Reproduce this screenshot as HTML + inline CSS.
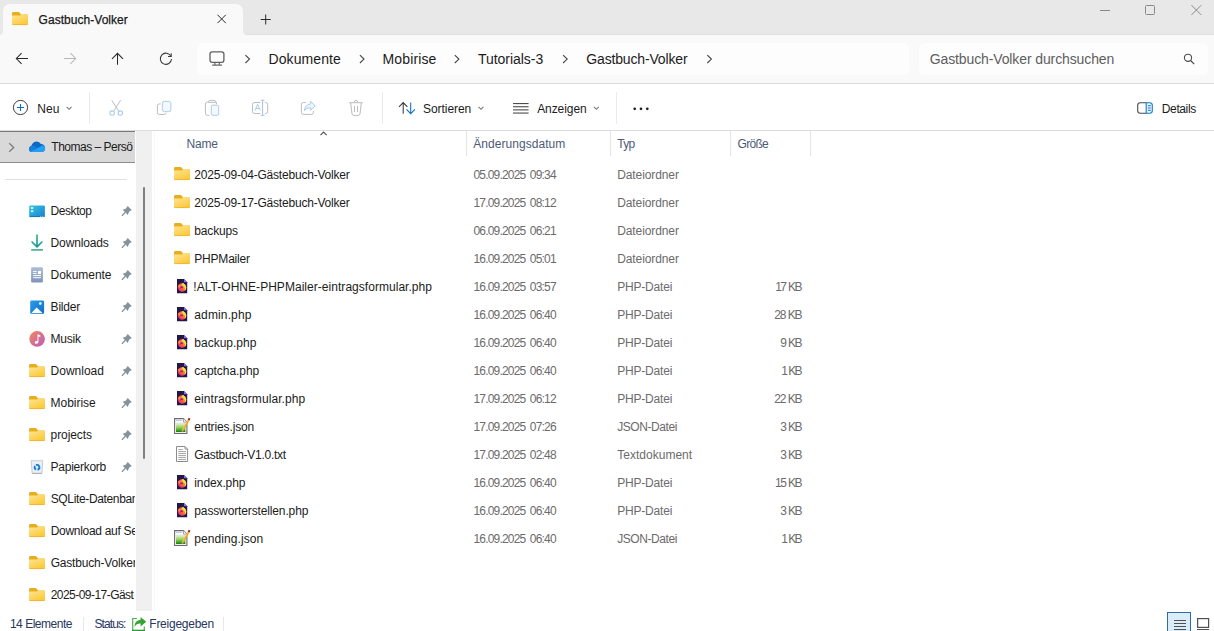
<!DOCTYPE html>
<html lang="de">
<head>
<meta charset="utf-8">
<title>Gastbuch-Volker</title>
<style>
*{box-sizing:border-box;margin:0;padding:0}
html,body{width:1214px;height:631px;overflow:hidden;background:#fff}
body{font-family:"Liberation Sans","DejaVu Sans",sans-serif;font-size:12px;color:#1b1b1b;position:relative}
.abs{position:absolute}
.t{position:absolute;white-space:nowrap;line-height:16px;height:16px}
svg{position:absolute;overflow:visible}
#titlebar{left:0;top:0;width:1214px;height:35px;background:#e8e8e8;border-bottom:1px solid #e0e0e0}
#tab{left:3px;top:4px;width:240px;height:31px;background:#f9f9f9;border-radius:7px 7px 0 0}
#tabcl{left:-4px;top:27px;width:4px;height:4px;background:radial-gradient(circle at 0 0,rgba(249,249,249,0) 3.5px,#f9f9f9 4.5px)}
#tabcr{left:243px;top:31px;width:4px;height:4px;background:radial-gradient(circle at 100% 0,rgba(249,249,249,0) 3.5px,#f9f9f9 4.5px)}
#navbar{left:0;top:35px;width:1214px;height:48px;background:#f9f9f9}
#navline{left:0;top:83px;width:1214px;height:1px;background:#d9d9d9}
#addr{left:197px;top:43px;width:712px;height:31.5px;background:#fdfdfd;border-radius:5px}
#search{left:918.5px;top:43px;width:289.5px;height:31.5px;background:#fdfdfd;border-radius:5px}
#cmdbar{left:0;top:84px;width:1214px;height:46px;background:#fff}
#cmdline{left:0;top:130px;width:1214px;height:1px;background:#dcdcdc}
.csep{position:absolute;top:92px;width:1px;height:32px;background:#ebebeb}
#sidesel{left:0;top:131px;width:135px;height:32px;background:#d9d9d9;border-top:1px solid #7a7a7a;border-bottom:1px solid #8c8c8c}
#sbtrack{left:136px;top:131px;width:16px;height:480px;background:#f0f0f0}
#sbthumb{left:143px;top:187.3px;width:2.2px;height:271.4px;background:#7f7f7f;border-radius:1px}
#sidediv{left:5px;top:179px;width:122px;height:1px;background:#e0e0e0}
.hsep{position:absolute;top:131px;width:1px;height:25px;background:#e5e5e5}
.ssep{position:absolute;top:617px;width:1px;height:14px;background:#e8e8e8}
#vbtn{left:1167px;top:612px;width:24px;height:22px;background:#d9ecf8;border:1px solid #2e6da4}
</style>
</head>

<body>
<!-- TITLE BAR -->
<div id="titlebar" class="abs"></div>
<div id="tab" class="abs"><div id="tabcl" class="abs"></div></div>
<div id="tabcr" class="abs"></div>
<!-- NAV BAR -->
<div id="navbar" class="abs"></div>
<div id="navline" class="abs"></div>
<div id="addr" class="abs"></div>
<div id="search" class="abs"></div>
<!-- COMMAND BAR -->
<div id="cmdbar" class="abs"></div>
<div id="cmdline" class="abs"></div>
<div class="csep" style="left:89px"></div>
<div class="csep" style="left:382px"></div>
<div class="csep" style="left:616px"></div>
<!-- SIDEBAR -->
<div id="sidesel" class="abs"></div>
<div id="sbtrack" class="abs"></div>
<div id="sbthumb" class="abs"></div>
<div id="sidediv" class="abs"></div>
<div class="abs" style="left:154px;top:131px;width:1px;height:480px;background:#f7f7f7"></div>
<!-- LIST HEADER -->
<div class="hsep" style="left:466px"></div>
<div class="hsep" style="left:610px"></div>
<div class="hsep" style="left:730px"></div>
<div class="hsep" style="left:810px"></div>
<!-- STATUS BAR -->
<div class="ssep" style="left:83px"></div>
<div class="ssep" style="left:223px"></div>
<div id="vbtn" class="abs"></div>

<!-- TEXT -->
<div class="t" style="left:38.60px;top:12px;color:#1a1a1a;letter-spacing:0.035px;-webkit-text-stroke:0.25px #1a1a1a;">Gastbuch-Volker</div>
<div class="t" style="left:268.50px;top:51px;font-size:14px;letter-spacing:0.087px;">Dokumente</div>
<div class="t" style="left:382.60px;top:51px;font-size:14px;letter-spacing:0.112px;">Mobirise</div>
<div class="t" style="left:477.90px;top:51px;font-size:14px;letter-spacing:-0.023px;">Tutorials-3</div>
<div class="t" style="left:586.30px;top:51px;font-size:14px;letter-spacing:-0.160px;">Gastbuch-Volker</div>
<div class="t" style="left:929.70px;top:51px;font-size:14px;color:#5e5e5e;letter-spacing:-0.114px;">Gastbuch-Volker durchsuchen</div>
<div class="t" style="left:37.30px;top:101px;letter-spacing:0.030px;">Neu</div>
<div class="t" style="left:423.10px;top:101px;letter-spacing:-0.077px;">Sortieren</div>
<div class="t" style="left:537.20px;top:101px;letter-spacing:-0.081px;">Anzeigen</div>
<div class="t" style="left:1161.80px;top:101px;letter-spacing:-0.380px;">Details</div>
<div class="t" style="left:51.30px;top:139px;letter-spacing:-0.489px;overflow:hidden;width:81.70px;">Thomas – Persönlich</div>
<div class="t" style="left:50.60px;top:203px;letter-spacing:-0.441px;">Desktop</div>
<div class="t" style="left:50.60px;top:235px;letter-spacing:-0.146px;">Downloads</div>
<div class="t" style="left:50.60px;top:267px;letter-spacing:-0.061px;">Dokumente</div>
<div class="t" style="left:50.60px;top:299px;letter-spacing:-0.217px;">Bilder</div>
<div class="t" style="left:50.60px;top:331px;letter-spacing:-0.234px;">Musik</div>
<div class="t" style="left:50.60px;top:363px;">Download</div>
<div class="t" style="left:50.60px;top:395px;letter-spacing:-0.039px;">Mobirise</div>
<div class="t" style="left:50.60px;top:427px;letter-spacing:-0.088px;">projects</div>
<div class="t" style="left:50.60px;top:459px;letter-spacing:-0.262px;">Papierkorb</div>
<div class="t" style="left:50.70px;top:491px;letter-spacing:-0.352px;overflow:hidden;width:84.30px;">SQLite-Datenbanken</div>
<div class="t" style="left:50.70px;top:523px;letter-spacing:-0.301px;overflow:hidden;width:84.30px;">Download auf Server</div>
<div class="t" style="left:50.70px;top:555px;letter-spacing:-0.194px;overflow:hidden;width:84.30px;">Gastbuch-Volker</div>
<div class="t" style="left:50.70px;top:587px;letter-spacing:-0.535px;overflow:hidden;width:83.60px;">2025-09-17-Gästebuch-Volker</div>
<div class="t" style="left:186.60px;top:136px;color:#4c5a78;letter-spacing:-0.245px;">Name</div>
<div class="t" style="left:473.30px;top:136px;color:#4c5a78;letter-spacing:0.046px;">Änderungsdatum</div>
<div class="t" style="left:617.20px;top:136px;color:#4c5a78;letter-spacing:-0.634px;">Typ</div>
<div class="t" style="left:737.60px;top:136px;color:#4c5a78;letter-spacing:-0.733px;">Größe</div>
<div class="t" style="left:194.30px;top:167px;letter-spacing:-0.203px;">2025-09-04-Gästebuch-Volker</div>
<div class="t" style="left:473.40px;top:167px;color:#6b6b6b;letter-spacing:-0.797px;word-spacing:1.8px;">05.09.2025 09:34</div>
<div class="t" style="left:617.20px;top:167px;color:#6b6b6b;letter-spacing:-0.101px;">Dateiordner</div>
<div class="t" style="left:194.30px;top:195px;letter-spacing:-0.203px;">2025-09-17-Gästebuch-Volker</div>
<div class="t" style="left:473.40px;top:195px;color:#6b6b6b;letter-spacing:-0.797px;word-spacing:1.8px;">17.09.2025 08:12</div>
<div class="t" style="left:617.20px;top:195px;color:#6b6b6b;letter-spacing:-0.101px;">Dateiordner</div>
<div class="t" style="left:194.30px;top:223px;letter-spacing:-0.166px;">backups</div>
<div class="t" style="left:473.40px;top:223px;color:#6b6b6b;letter-spacing:-0.797px;word-spacing:1.8px;">06.09.2025 06:21</div>
<div class="t" style="left:617.20px;top:223px;color:#6b6b6b;letter-spacing:-0.101px;">Dateiordner</div>
<div class="t" style="left:194.30px;top:251px;letter-spacing:-0.206px;">PHPMailer</div>
<div class="t" style="left:473.40px;top:251px;color:#6b6b6b;letter-spacing:-0.797px;word-spacing:1.8px;">16.09.2025 05:01</div>
<div class="t" style="left:617.20px;top:251px;color:#6b6b6b;letter-spacing:-0.101px;">Dateiordner</div>
<div class="t" style="left:193.30px;top:279px;letter-spacing:0.038px;">!ALT-OHNE-PHPMailer-eintragsformular.php</div>
<div class="t" style="left:473.40px;top:279px;color:#6b6b6b;letter-spacing:-0.797px;word-spacing:1.8px;">16.09.2025 03:57</div>
<div class="t" style="left:617.20px;top:279px;color:#6b6b6b;letter-spacing:-0.190px;">PHP-Datei</div>
<div class="t" style="left:775.20px;top:279px;color:#6b6b6b;letter-spacing:-1.546px;word-spacing:0.8px;">17 KB</div>
<div class="t" style="left:194.30px;top:307px;letter-spacing:0.129px;">admin.php</div>
<div class="t" style="left:473.40px;top:307px;color:#6b6b6b;letter-spacing:-0.797px;word-spacing:1.8px;">16.09.2025 06:40</div>
<div class="t" style="left:617.20px;top:307px;color:#6b6b6b;letter-spacing:-0.190px;">PHP-Datei</div>
<div class="t" style="left:774.30px;top:307px;color:#6b6b6b;letter-spacing:-1.321px;word-spacing:0.8px;">28 KB</div>
<div class="t" style="left:194.30px;top:335px;">backup.php</div>
<div class="t" style="left:473.40px;top:335px;color:#6b6b6b;letter-spacing:-0.797px;word-spacing:1.8px;">16.09.2025 06:40</div>
<div class="t" style="left:617.20px;top:335px;color:#6b6b6b;letter-spacing:-0.190px;">PHP-Datei</div>
<div class="t" style="left:780.30px;top:335px;color:#6b6b6b;letter-spacing:-1.537px;word-spacing:0.8px;">9 KB</div>
<div class="t" style="left:194.30px;top:363px;letter-spacing:-0.041px;">captcha.php</div>
<div class="t" style="left:473.40px;top:363px;color:#6b6b6b;letter-spacing:-0.797px;word-spacing:1.8px;">16.09.2025 06:40</div>
<div class="t" style="left:617.20px;top:363px;color:#6b6b6b;letter-spacing:-0.190px;">PHP-Datei</div>
<div class="t" style="left:781.20px;top:363px;color:#6b6b6b;letter-spacing:-1.837px;word-spacing:0.8px;">1 KB</div>
<div class="t" style="left:194.30px;top:391px;letter-spacing:0.078px;">eintragsformular.php</div>
<div class="t" style="left:473.40px;top:391px;color:#6b6b6b;letter-spacing:-0.797px;word-spacing:1.8px;">17.09.2025 06:12</div>
<div class="t" style="left:617.20px;top:391px;color:#6b6b6b;letter-spacing:-0.190px;">PHP-Datei</div>
<div class="t" style="left:774.30px;top:391px;color:#6b6b6b;letter-spacing:-1.321px;word-spacing:0.8px;">22 KB</div>
<div class="t" style="left:194.30px;top:419px;letter-spacing:-0.126px;">entries.json</div>
<div class="t" style="left:473.40px;top:419px;color:#6b6b6b;letter-spacing:-0.797px;word-spacing:1.8px;">17.09.2025 07:26</div>
<div class="t" style="left:617.20px;top:419px;color:#6b6b6b;letter-spacing:-0.416px;">JSON-Datei</div>
<div class="t" style="left:780.30px;top:419px;color:#6b6b6b;letter-spacing:-1.537px;word-spacing:0.8px;">3 KB</div>
<div class="t" style="left:194.30px;top:447px;letter-spacing:-0.263px;">Gastbuch-V1.0.txt</div>
<div class="t" style="left:473.40px;top:447px;color:#6b6b6b;letter-spacing:-0.797px;word-spacing:1.8px;">17.09.2025 02:48</div>
<div class="t" style="left:617.20px;top:447px;color:#6b6b6b;letter-spacing:0.021px;">Textdokument</div>
<div class="t" style="left:780.30px;top:447px;color:#6b6b6b;letter-spacing:-1.537px;word-spacing:0.8px;">3 KB</div>
<div class="t" style="left:194.30px;top:475px;letter-spacing:-0.121px;">index.php</div>
<div class="t" style="left:473.40px;top:475px;color:#6b6b6b;letter-spacing:-0.797px;word-spacing:1.8px;">16.09.2025 06:40</div>
<div class="t" style="left:617.20px;top:475px;color:#6b6b6b;letter-spacing:-0.190px;">PHP-Datei</div>
<div class="t" style="left:775.00px;top:475px;color:#6b6b6b;letter-spacing:-1.496px;word-spacing:0.8px;">15 KB</div>
<div class="t" style="left:194.30px;top:503px;letter-spacing:-0.133px;">passworterstellen.php</div>
<div class="t" style="left:473.40px;top:503px;color:#6b6b6b;letter-spacing:-0.797px;word-spacing:1.8px;">16.09.2025 06:40</div>
<div class="t" style="left:617.20px;top:503px;color:#6b6b6b;letter-spacing:-0.190px;">PHP-Datei</div>
<div class="t" style="left:780.30px;top:503px;color:#6b6b6b;letter-spacing:-1.537px;word-spacing:0.8px;">3 KB</div>
<div class="t" style="left:194.30px;top:531px;letter-spacing:0.074px;">pending.json</div>
<div class="t" style="left:473.40px;top:531px;color:#6b6b6b;letter-spacing:-0.797px;word-spacing:1.8px;">16.09.2025 06:40</div>
<div class="t" style="left:617.20px;top:531px;color:#6b6b6b;letter-spacing:-0.416px;">JSON-Datei</div>
<div class="t" style="left:781.20px;top:531px;color:#6b6b6b;letter-spacing:-1.837px;word-spacing:0.8px;">1 KB</div>
<div class="t" style="left:9.90px;top:616px;color:#26365e;letter-spacing:-0.480px;">14 Elemente</div>
<div class="t" style="left:94.50px;top:616px;color:#26365e;letter-spacing:-0.920px;">Status:</div>
<div class="t" style="left:149.30px;top:616px;color:#26365e;letter-spacing:-0.251px;">Freigegeben</div>
<!-- ICONS -->
<svg style="left:0;top:0" width="1214" height="631" viewBox="0 0 1214 631" fill="none">
<defs>
  <linearGradient id="gFold" x1="0" y1="0" x2="0.6" y2="1"><stop offset="0" stop-color="#ffe596"/><stop offset="1" stop-color="#fbc93a"/></linearGradient>
  <linearGradient id="gDesk" x1="0" y1="0" x2="1" y2="1"><stop offset="0" stop-color="#35c6e4"/><stop offset="1" stop-color="#1a7fd0"/></linearGradient>
  <linearGradient id="gDl" x1="0" y1="0" x2="0" y2="1"><stop offset="0" stop-color="#33b87a"/><stop offset="1" stop-color="#1a98a4"/></linearGradient>
  <linearGradient id="gDoc" x1="0" y1="0" x2="0" y2="1"><stop offset="0" stop-color="#aebcda"/><stop offset="1" stop-color="#7d93b8"/></linearGradient>
  <linearGradient id="gPic" x1="0" y1="0" x2="1" y2="1"><stop offset="0" stop-color="#2b9dea"/><stop offset="1" stop-color="#136cc4"/></linearGradient>
  <linearGradient id="gMus" x1="0" y1="0" x2="1" y2="1"><stop offset="0" stop-color="#f5875a"/><stop offset="1" stop-color="#b95cc0"/></linearGradient>
  <radialGradient id="gFox" cx="0.8" cy="0.25" r="0.95"><stop offset="0" stop-color="#ffc83a"/><stop offset="0.4" stop-color="#ff8238"/><stop offset="0.75" stop-color="#f0404a"/><stop offset="1" stop-color="#c01f88"/></radialGradient>
  <linearGradient id="gGreen" x1="0" y1="0" x2="0" y2="1"><stop offset="0" stop-color="#e2ecb0"/><stop offset="0.45" stop-color="#8ed05a"/><stop offset="1" stop-color="#137a0c"/></linearGradient>
  <!-- folder 16x13, origin top-left -->
  <g id="folder">
    <path d="M0 1.4Q0 0 1.4 0H6.2Q7.2 0 7.8 0.8L9 2.6H14.8Q16 2.6 16 3.8V6H0Z" fill="#e9ae1e"/>
    <path d="M0 3.6H7.2Q8 3.6 8.6 3.1L9.3 2.6H14.8Q16 2.6 16 3.8V11.8Q16 13 14.8 13H1.2Q0 13 0 11.8Z" fill="url(#gFold)"/>
    <path d="M0.4 12.6H15.6" stroke="#e6b430" stroke-width="0.8"/>
  </g>
  <!-- firefox php doc icon, origin = (177,279) -->
  <g id="php">
    <path d="M0 0H7L10.2 3.2V14.3H0Z" fill="#211748"/>
    <path d="M7 0.2L10 3.2H7.8Q7 3.2 7 2.4Z" fill="#8a6cf5"/>
    <circle cx="5" cy="8.5" r="4.25" fill="url(#gFox)"/>
    <path d="M1 7Q1.4 5.6 2.6 5.4Q3 6.2 4 6.4Q2.4 7.2 2.6 9Q1.4 8.4 1 7Z" fill="#ff8a4a"/>
    <path d="M4.9 5.4Q5.4 4.2 6.3 3.8Q6.5 5 8 5.8Q9.4 7.2 9.25 9Q9 11 7.6 12Q8.6 9.6 7.4 8Q6.6 6.6 5.6 6.6Q5.4 5.8 4.9 5.4Z" fill="#ffd94a"/>
    <ellipse cx="4.7" cy="8.4" rx="1.5" ry="1.25" fill="#8a2a7a"/>
    <path d="M3.2 8.4Q4.6 9.6 6.4 8.6Q6 10.4 4.4 10.4Q3.4 9.8 3.2 8.4Z" fill="#ff5a4a" fill-opacity="0.8"/>
  </g>
  <!-- json/notepad icon, origin=(174,418) -->
  <g id="json">
    <path d="M0.6 0.6H9.4L12.9 4.1V15.5H0.6Z" fill="#fff" stroke="#6a6a6a" stroke-width="1.1"/>
    <path d="M9.4 0.6V4.1H12.9" fill="#f4f4f4" stroke="#8a8a8a" stroke-width="0.8"/>
    <path d="M2.4 2.5H8.4" stroke="#7f8fc6" stroke-width="1" stroke-dasharray="1 1"/>
    <rect x="2" y="6" width="9.4" height="8.1" fill="url(#gGreen)"/>
    <path d="M2 5.2H11.2" stroke="#c4d3e6" stroke-width="0.9"/>
    <path d="M14.6 2L8.8 12.4" stroke="#eea122" stroke-width="1.9"/>
    <path d="M14 1.8L8.4 11.8" stroke="#ffd666" stroke-width="0.6"/>
    <path d="M15.6 0.3L14.6 2" stroke="#a3121f" stroke-width="1.9"/>
    <path d="M8 12L7.7 14L9.6 12.9Z" fill="#e6c596"/>
  </g>
  <!-- pin icon origin (122,206) -->
  <g id="pin">
    <g transform="translate(7.7 2) rotate(45)">
      <path d="M-2.8 0H2.8L2.3 3.4L3.7 6.3H-3.7L-2.3 3.4Z" fill="#87929a"/>
      <path d="M0 6.2V11" stroke="#7d888e" stroke-width="1.2"/>
    </g>
  </g>
  <!-- breadcrumb chevron, origin = left/top of 5x8 -->
  <path id="chev" d="M0.1 0.4L4.2 4.3L0.1 8.2" stroke="#444" stroke-width="1.1" fill="none"/>
  <!-- small down chevron 5.5x3 -->
  <path id="dchev" d="M0.2 0.3L2.6 2.7L5 0.3" stroke="#777" stroke-width="1.1" fill="none"/>
</defs>

<!-- ===== title bar ===== -->
<use href="#folder" x="12" y="12"/>
<path d="M217.5 14.8L225.8 23.1M225.8 14.8L217.5 23.1" stroke="#2a2a2a" stroke-width="1"/>
<path d="M260.7 19.5H270.7M265.7 14.5V24.5" stroke="#2a2a2a" stroke-width="1"/>
<path d="M1100 10.5H1110" stroke="#8a8a8a" stroke-width="1"/>
<rect x="1145.5" y="5.5" width="9" height="9" rx="1" stroke="#8a8a8a" stroke-width="1"/>
<path d="M1191.5 5.2L1201.2 14.9M1201.2 5.2L1191.5 14.9" stroke="#8a8a8a" stroke-width="1"/>

<!-- ===== nav bar ===== -->
<path d="M16.4 58.5H28M21.6 53.2L16.3 58.5L21.6 63.8" stroke="#2a2a2a" stroke-width="1.05"/>
<path d="M64 58.5H75.6M70.4 53.2L75.7 58.5L70.4 63.8" stroke="#b8b8b8" stroke-width="1.05"/>
<path d="M117.5 53.4V64.8M112 58.9L117.5 53.3L123 58.9" stroke="#2a2a2a" stroke-width="1.05"/>
<path d="M171 56.4A5.6 5.6 0 1 0 171.5 59" stroke="#3a3a3a" stroke-width="1.05"/>
<path d="M171.2 53.2V56.4H168" stroke="#3a3a3a" stroke-width="1.05"/>
<!-- monitor -->
<rect x="210" y="51.9" width="13.9" height="10.4" rx="2.2" stroke="#606060" stroke-width="1.3"/>
<path d="M214.9 62.8V65M219.3 62.8V65M212.2 65.2H222" stroke="#6a6a6a" stroke-width="1.2"/>
<use href="#chev" x="245.3" y="54.8"/>
<use href="#chev" x="359.8" y="54.8"/>
<use href="#chev" x="454.7" y="54.8"/>
<use href="#chev" x="563" y="54.8"/>
<use href="#chev" x="707.2" y="54.8"/>
<!-- search -->
<circle cx="1188" cy="57.8" r="3.6" stroke="#4a4a4a" stroke-width="1.1"/>
<path d="M1190.6 60.5L1194.2 64.1" stroke="#4a4a4a" stroke-width="1.2"/>

<!-- ===== command bar ===== -->
<circle cx="20.5" cy="107.5" r="7.1" stroke="#3a3a3a" stroke-width="1"/>
<path d="M17 107.5H24M20.5 104V111" stroke="#0a6fc9" stroke-width="1.1"/>
<use href="#dchev" x="66.5" y="106.6"/>
<!-- scissors -->
<path d="M111.8 100.3L118.9 111.4M120.6 100.3L113.5 111.4" stroke="#bcbcbc" stroke-width="1"/>
<circle cx="112.1" cy="113.1" r="2.2" stroke="#a9cdec" stroke-width="1.1"/>
<circle cx="120.3" cy="113.1" r="2.2" stroke="#a9cdec" stroke-width="1.1"/>
<!-- copy -->
<path d="M160.6 103.9H159.4Q157.4 103.9 157.4 105.9V112.5Q157.4 114.5 159.4 114.5H163.8Q165.6 114.5 166 113" stroke="#bcbcbc" stroke-width="1"/>
<rect x="162.3" y="101.4" width="8.6" height="10.3" rx="2.2" stroke="#a9cdec" stroke-width="1" fill="#f3f9fe"/>
<!-- paste -->
<path d="M208.4 102H207.4Q205.4 102 205.4 104V113.3Q205.4 115.3 207.4 115.3H209.4M216 102Q216.5 102.4 216.5 104.2" stroke="#bcbcbc" stroke-width="1"/>
<path d="M208.4 102.3Q208.4 100.4 210.3 100.4H214.1Q216 100.4 216 102.3Z" stroke="#bcbcbc" stroke-width="1"/>
<rect x="211.3" y="105.2" width="7.4" height="10.1" rx="1.6" stroke="#a9cdec" stroke-width="1" fill="#f3f9fe"/>
<!-- rename -->
<path d="M260.4 102.5H254.6Q252.5 102.5 252.5 104.6V111.4Q252.5 113.5 254.6 113.5H260.4M264.8 102.5H265.6Q267.7 102.5 267.7 104.6V111.4Q267.7 113.5 265.6 113.5H264.8" stroke="#bcbcbc" stroke-width="1"/>
<path d="M262.6 100.2V115.2M260.7 100.2H264.5M260.7 115.3H264.5" stroke="#a3c4e4" stroke-width="1"/>
<path d="M254.9 110.6L257.6 104.3L260.3 110.6M255.8 108.5H259.4" stroke="#a9cdec" stroke-width="1"/>
<!-- share -->
<path d="M305.8 102.5H303.4Q301.4 102.5 301.4 104.5V112.4Q301.4 114.4 303.4 114.4H311.4Q313.4 114.4 313.4 112.4V111" stroke="#bcbcbc" stroke-width="1"/>
<path d="M310.6 101.4L315.3 105.8L310.6 110.2V107.8Q306.4 107.4 304.4 110.6Q304.8 104.8 310.6 104Z" stroke="#a9cdec" stroke-width="1" stroke-linejoin="round" fill="#eef6fd"/>
<!-- trash -->
<path d="M349.2 102.7H362.8M354.2 102.5Q354.2 100.4 356 100.4Q357.8 100.4 357.8 102.5M350.7 103L352 113.8Q352.2 115.4 353.8 115.4H358.2Q359.8 115.4 360 113.8L361.3 103M354.5 106V112.2M357.5 106V112.2" stroke="#bcbcbc" stroke-width="1"/>
<!-- sort -->
<path d="M403.2 102.6V113.8M399 106.9L403.2 102.6L407.4 106.9" stroke="#3a3a3a" stroke-width="1.05"/>
<path d="M410.7 102.4V113.6M406.5 109.4L410.7 113.7L414.9 109.4" stroke="#0a6fc9" stroke-width="1.05"/>
<use href="#dchev" x="478.4" y="106.6"/>
<!-- view -->
<path d="M513 103.6H528.6M513 106.75H528.6M513 109.9H528.6M513 113.05H528.6" stroke="#3a3a3a" stroke-width="1"/>
<use href="#dchev" x="593.8" y="106.6"/>
<!-- dots -->
<circle cx="634.7" cy="108.8" r="1.35" fill="#1f1f1f"/><circle cx="641" cy="108.8" r="1.35" fill="#1f1f1f"/><circle cx="647.3" cy="108.8" r="1.35" fill="#1f1f1f"/>
<!-- details pane -->
<path d="M1146.2 102.7H1140.2Q1137.7 102.7 1137.7 105.2V110.8Q1137.7 113.3 1140.2 113.3H1146.2" stroke="#4a4a4a" stroke-width="1.1"/>
<path d="M1146.2 102.7H1149.8Q1152.3 102.7 1152.3 105.2V110.8Q1152.3 113.3 1149.8 113.3H1146.2Z" stroke="#1478d2" stroke-width="1.1" fill="#eaf4fd"/>
<path d="M1147.9 105.7H1150.8M1147.9 108H1150.8M1147.9 110.3H1150.8" stroke="#1478d2" stroke-width="1"/>

<!-- ===== sidebar ===== -->
<path d="M9.2 143.3L13.7 147.5L9.2 151.7" stroke="#7c7c7c" stroke-width="1.3"/>
<!-- onedrive cloud -->
<path d="M32.4 152Q29 152 29 148.9Q29 146.4 31.4 145.7Q32.6 141.5 36.7 141.4Q39.6 141.4 41 144Q44.9 144.3 45.1 148.2Q45.1 152 41.4 152Z" fill="#0b69c6"/>
<path d="M29 148.9Q29 146.4 31.4 145.7Q33.2 145.2 34.8 146.2L40.6 149.8L37.6 152H32.4Q29 152 29 148.9Z" fill="#137edb"/>
<path d="M35.4 149.4L42 145.6Q43.4 145 44.4 146Q45.1 147 45.1 148.2Q45.1 152 41.4 152H32.4Q31.2 152 30.4 151.5Z" fill="#22a0f2"/>
<!-- desktop -->
<rect x="29.2" y="205.6" width="15.7" height="11.4" rx="1.2" fill="url(#gDesk)"/>
<path d="M29.6 216.6H44.5" stroke="#176b9e" stroke-width="0.8"/>
<rect x="31" y="207" width="2.3" height="2" fill="#c9f6f9"/><rect x="31" y="210.2" width="2.3" height="2" fill="#c9f6f9"/>
<rect x="40.4" y="216.2" width="0.8" height="0.9" fill="#fff"/><rect x="42.4" y="216.2" width="0.8" height="0.9" fill="#fff"/>
<!-- downloads -->
<path d="M37 235.2V246.8M32.1 242L37 246.9L41.9 242" stroke="url(#gDl)" stroke-width="1.7" stroke-linecap="round" stroke-linejoin="round"/>
<path d="M31.2 249.9H42.9" stroke="#3bae84" stroke-width="1.6"/>
<!-- dokumente -->
<rect x="31.1" y="267.2" width="11.8" height="15.4" rx="1.3" fill="url(#gDoc)"/>
<path d="M33.2 271.5H36.6M33.2 273.5H36.6M33.2 275.6H41M33.2 277.7H41" stroke="#fff" stroke-width="1"/>
<rect x="38" y="270.9" width="3" height="3.2" fill="#fff"/>
<!-- bilder -->
<rect x="30.2" y="300.4" width="13.9" height="13.5" rx="1.4" fill="url(#gPic)"/>
<path d="M31.2 313.2L36.6 307.4L42.8 313.2Z" fill="#fff"/>
<circle cx="40.3" cy="303.5" r="1.4" fill="#c9f0ff"/>
<!-- musik -->
<circle cx="37.1" cy="338.9" r="7.8" fill="url(#gMus)"/>
<path d="M37.5 334.3L40.3 335.2V337L38.4 336.4V342Q38.4 343.8 36.4 343.8Q34.6 343.8 34.7 342.3Q34.9 340.8 37.5 341Z" fill="#fff"/>
<!-- folders -->
<use href="#folder" x="29" y="364"/>
<use href="#folder" x="29" y="396"/>
<use href="#folder" x="29" y="428"/>
<use href="#folder" x="29" y="492"/>
<use href="#folder" x="29" y="524"/>
<use href="#folder" x="29" y="556"/>
<use href="#folder" x="29" y="588"/>
<!-- papierkorb -->
<path d="M31.2 460.6H42.8L41.8 473.4H32.2Z" fill="#eceff3" stroke="#bfc5cb" stroke-width="0.9"/><path d="M31 460.5H43" stroke="#d5d9de" stroke-width="1.2"/>
<path d="M32.3 473.4H41.7" stroke="#a9aeb3" stroke-width="1"/>
<circle cx="37" cy="467.3" r="3.7" fill="#d3eefc"/><circle cx="37" cy="467.3" r="2.4" stroke="#1878d4" stroke-width="1.8" stroke-dasharray="3.7 1.33" transform="rotate(-20 37 467.3)"/>
<!-- pins -->
<use href="#pin" x="122" y="206"/>
<use href="#pin" x="122" y="238"/>
<use href="#pin" x="122" y="270"/>
<use href="#pin" x="122" y="302"/>
<use href="#pin" x="122" y="334"/>
<use href="#pin" x="122" y="366"/>
<use href="#pin" x="122" y="398"/>
<use href="#pin" x="122" y="430"/>
<use href="#pin" x="122" y="462"/>

<!-- ===== list ===== -->
<path d="M320.5 135.1L323.6 132.1L326.7 135.1" stroke="#555" stroke-width="1.25"/>
<use href="#folder" x="174" y="167"/>
<use href="#folder" x="174" y="195"/>
<use href="#folder" x="174" y="223"/>
<use href="#folder" x="174" y="251"/>
<use href="#php" x="177" y="279"/>
<use href="#php" x="177" y="307"/>
<use href="#php" x="177" y="335"/>
<use href="#php" x="177" y="363"/>
<use href="#php" x="177" y="391"/>
<use href="#json" x="174" y="418"/>
<!-- txt -->
<path d="M176.5 446.5H185L187.6 449.1V461.5H176.5Z" fill="#fff" stroke="#8c8c8c"/>
<path d="M185 446.5V449.1H187.6" stroke="#8c8c8c" stroke-width="0.9"/>
<path d="M178.3 449.6H182.8M178.3 451.6H186M178.3 453.6H186M178.3 455.6H186M178.3 457.6H186M178.3 459.6H186" stroke="#9a9a9a" stroke-width="0.9"/>
<use href="#php" x="177" y="475"/>
<use href="#php" x="177" y="503"/>
<use href="#json" x="174" y="530"/>

<!-- ===== status bar ===== -->
<path d="M137 618.5H132.7V631M144.3 626.5V631" stroke="#4fb04f" stroke-width="1.2"/><path d="M132.2 630.4H144.9" stroke="#2f9a2f" stroke-width="1.4"/>
<path d="M140.6 617L146.3 621.7L140.6 626.4V623.6Q136.6 623.4 134.4 627Q134.6 620.4 140.6 619.8Z" fill="#36a336"/>
<path d="M1174 620.5H1186M1174 623.5H1186M1174 626.5H1186M1174 629.5H1186" stroke="#505050" stroke-width="1"/>
<rect x="1197.6" y="618.6" width="11" height="8.8" stroke="#505050" stroke-width="1.2"/>
<path d="M1197 629.5H1209.2" stroke="#505050" stroke-width="1"/>
</svg>

</body>
</html>
